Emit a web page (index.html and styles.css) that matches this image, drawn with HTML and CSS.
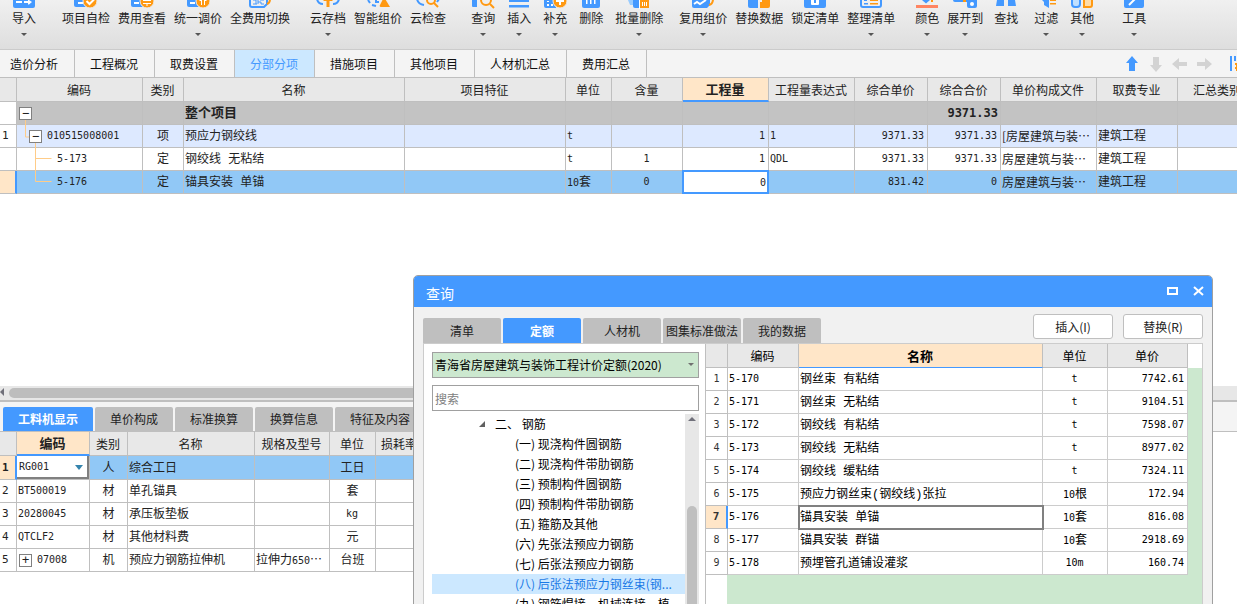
FILE: index.html
```html
<!DOCTYPE html>
<html lang="zh-CN">
<head>
<meta charset="utf-8">
<title>分部分项</title>
<link rel="stylesheet" href="styles.css">
</head>
<body>
<header class="toolbar">
  <div class="group g-first">
    <button class="tool"><svg class="ico" viewBox="0 0 24 9"><path class="b" d="M1 0h22v6q0 2-2 2H3q-2 0-2-2z"/><path class="w" d="M4 1h6v2H4zM12 1h4v-1h1l3 2-3 2.500h-1V3h-4z"/></svg><span>导入</span><i class="caret"></i></button>
  </div>
  <div class="group g-xl">
    <button class="tool"><svg class="ico" viewBox="0 0 24 9"><path class="b" d="M0 0h12v7H2q-2 0-2-2z"/><path class="w" d="M4 2h5v2H4z"/><circle class="o ring" cx="16" cy="1" r="7"/><path class="ws" d="M12.500 1l3 3 5-5"/></svg><span>项目自检</span></button>
    <button class="tool"><svg class="ico" viewBox="0 0 24 9"><path class="b" d="M1 0h12v7H3q-2 0-2-2z"/><path class="w" d="M4 2h5v2H4z"/><circle class="o ring" cx="17" cy="1" r="7"/><path class="w" d="M13 0h8v1h-8zM13 3h8v1h-8zM16.500 3h1v3h-1z"/></svg><span>费用查看</span></button>
    <button class="tool"><svg class="ico" viewBox="0 0 24 9"><path class="b" d="M1 0h12v7H3q-2 0-2-2z"/><path class="w" d="M4 2h5v2H4z"/><circle class="o ring" cx="17" cy="1" r="7"/><path class="w" d="M13 1l2-2h4l2 2h-2v4h-1V0h-2v5h-1V1z"/></svg><span>统一调价</span><i class="caret"></i></button>
    <button class="tool"><svg class="ico" viewBox="0 0 24 9"><path class="bs" d="M2-1v6q0 2 2 2h12l3-3v-5"/><path class="bs thin" d="M5 0h3v4M10 0v4M10 2h3v2h3M5 4h4M12 0h4"/><path class="os" d="M22-1q0 4-3 5"/></svg><span>全费用切换</span></button>
  </div>
  <div class="group g-l">
    <button class="tool"><svg class="ico" viewBox="0 0 24 9"><path class="bs" d="M1-1q1 5 6 5M23-1q-1 5-6 5"/><path class="o" d="M10.500 0h3v7h-3zM7 1l5-5 5 5z"/></svg><span>云存档</span><i class="caret"></i></button>
    <button class="tool"><svg class="ico" viewBox="0 0 24 9"><path class="bs" d="M2 0l2 3M6 5l4 1M10-1v3h3"/><path class="o" d="M18-3l6 10h-9q-2 0-1-2z"/></svg><span>智能组价</span></button>
    <button class="tool"><svg class="ico" viewBox="0 0 24 9"><path class="bs" d="M1-1q1 5 7 6M23-1l-2 3"/><circle class="os" cx="15" cy="0" r="4"/><path class="os" d="M18 3l4 4"/></svg><span>云检查</span></button>
  </div>
  <div class="group g-xl">
    <button class="tool"><svg class="ico" viewBox="0 0 24 9"><path class="b" d="M1 0h5v7H2q-1 0-1-1z"/><circle class="os" cx="15" cy="0" r="5"/><path class="os" d="M19 4l4 4"/></svg><span>查询</span><i class="caret"></i></button>
    <button class="tool"><svg class="ico" viewBox="0 0 24 9"><path class="b" d="M2 0h20v2H2zM2 5h20v2.500H2z"/></svg><span>插入</span><i class="caret"></i></button>
    <button class="tool"><svg class="ico" viewBox="0 0 24 9"><path class="b" d="M1 0h12v8H3q-2 0-2-2z"/><path class="w" d="M4 1h2v1H4zM4 4h2v2H4zM8 4h2v2H8z"/><circle class="o ring" cx="17" cy="1" r="7"/><path class="w" d="M13 0h3v-2h2v2h3v2h-3v3h-2V2h-3z"/></svg><span>补充</span><i class="caret"></i></button>
    <button class="tool"><svg class="ico" viewBox="0 0 24 9"><path class="b" d="M3 0h18v6q0 2-2 2H5q-2 0-2-2z"/><path class="w" d="M7 0h1.500v4H7zM11 0h1.500v4H11zM15 0h1.500v4H15z"/></svg><span>删除</span></button>
    <button class="tool"><svg class="ico" viewBox="0 0 24 9"><path class="lb" d="M1 0h7v5H3z"/><path class="b" d="M6 0h7v8H8q-2 0-2-2z"/><path class="o" d="M13 0h9v8h-9z"/><path class="w" d="M12 0h1v9h-1zM15 2h1v4h-1zM17 2h1v4h-1zM19 2h1v4h-1z"/></svg><span>批量删除</span><i class="caret"></i></button>
  </div>
  <div class="group g-m">
    <button class="tool"><svg class="ico" viewBox="0 0 24 9"><path class="b" d="M1 0h18v5l-3 3H3q-2 0-2-2z"/><path class="ws" d="M3 4l3-2 3 2 6-4"/><path class="os" d="M22-1q0 5-4 6"/></svg><span>复用组价</span><i class="caret"></i></button>
    <button class="tool"><svg class="ico" viewBox="0 0 24 9"><path class="b" d="M1 0h10v8H3q-2 0-2-2z"/><path class="o" d="M13 2h2V0h8v6q0 2-2 2h-8z"/></svg><span>替换数据</span></button>
    <button class="tool"><svg class="ico" viewBox="0 0 24 9"><path class="b" d="M1 0h22v6q0 2-2 2H3q-2 0-2-2z"/><path class="w" d="M8 0h8v4q0 1-1 1H9q-1 0-1-1z"/><path class="b" d="M11 0h2v3h-2z"/></svg><span>锁定清单</span></button>
    <button class="tool"><svg class="ico" viewBox="0 0 24 9"><path class="bs" d="M2-1v6q0 2 2 2h16q2 0 2-2v-6"/><path class="b" d="M5 3h4v1.500H5zM5 0h3v1H5z"/><path class="o" d="M11 3h8v1.500h-8zM11 0h8v1h-8z"/></svg><span>整理清单</span><i class="caret"></i></button>
  </div>
  <div class="group g-l">
    <button class="tool"><svg class="ico" viewBox="0 0 24 9"><path class="r" d="M1 5h22v3H1z"/><path class="b" d="M7 0h8l-4 3.500z"/><path class="o" d="M16 0h2v2h-2z"/></svg><span>颜色</span><i class="caret"></i></button>
    <button class="tool"><svg class="ico" viewBox="0 0 24 9"><path class="b" d="M0 0h10v2H2q-2 0-2-2zM12 0h12v6q0 2-2 2h-6q-2 0-2-2V2h-2z"/><path class="o" d="M10 0h3v2h-3z"/><circle class="w" cx="19" cy="4" r="2"/></svg><span>展开到</span><i class="caret"></i></button>
  </div>
  <div class="group g-s">
    <button class="tool"><svg class="ico" viewBox="0 0 24 9"><path class="b" d="M3 0h7v6H2zM14 0h7l1 6h-8z"/></svg><span>查找</span></button>
  </div>
  <div class="group g-m">
    <button class="tool"><svg class="ico" viewBox="0 0 24 9"><path class="b" d="M8 0h7v8l-5-3V2z"/><path class="o" d="M16 0h6v1h-6zM16 3h6v1.500h-6z"/></svg><span>过滤</span><i class="caret"></i></button>
    <button class="tool"><svg class="ico" viewBox="0 0 24 9"><path class="bs lfill" d="M2-1v5q0 3 3 3h2q3 0 3-3v-5"/><path class="os ofill" d="M14-1v8h6q2 0 2-2v-6"/></svg><span>其他</span><i class="caret"></i></button>
  </div>
  <div class="group g-xxl">
    <button class="tool"><svg class="ico" viewBox="0 0 24 9"><path class="b" d="M2 0h20v6q0 2-2 2H4q-2 0-2-2z"/><path class="ws" d="M7 5l6-6"/></svg><span>工具</span><i class="caret"></i></button>
  </div>
</header>

<nav class="tabs">
  <button class="tab first">造价分析</button>
  <button class="tab">工程概况</button>
  <button class="tab">取费设置</button>
  <button class="tab active">分部分项</button>
  <button class="tab">措施项目</button>
  <button class="tab">其他项目</button>
  <button class="tab">人材机汇总</button>
  <button class="tab">费用汇总</button>
  <div class="moves">
    <button aria-label="上移"><svg width="16" height="16"><path class="b" d="M8 0l6 7h-3v8H5V7H2z"/></svg></button>
    <button aria-label="下移"><svg width="16" height="16"><path class="g" d="M8 16l6-7h-3V1H5v8H2z"/></svg></button>
    <button aria-label="左移"><svg width="16" height="16"><path class="g" d="M0 8l7-6v4h8v4H7v4z"/></svg></button>
    <button aria-label="右移"><svg width="16" height="16"><path class="g" d="M16 8L9 2v4H1v4h8v4z"/></svg></button>
    <button class="cut" aria-label="列设置"><svg width="16" height="16"><path class="b" d="M0 0h2v15H0zM4 0h2v5H4z"/><path class="o" d="M5 7h3V5h3v10H6v-2H5v-2h1V9H5z"/></svg></button>
  </div>
</nav>

<main class="work">
  <table class="grid main-grid">
    <colgroup><col class="w17"><col class="w126"><col class="w41"><col class="w221"><col class="w161"><col class="w46"><col class="w71"><col class="w86"><col class="w86"><col class="w73"><col class="w73"><col class="w96"><col class="w81"><col class="w80"></colgroup>
    <thead><tr><th></th><th>编码</th><th>类别</th><th>名称</th><th>项目特征</th><th>单位</th><th>含量</th><th class="current">工程量</th><th>工程量表达式</th><th>综合单价</th><th>综合合价</th><th>单价构成文件</th><th>取费专业</th><th>汇总类别</th></tr></thead>
    <tbody>
      <tr class="total"><td class="rn"></td><td class="tree"><div class="node lv0"><button class="box" aria-label="折叠">−</button></div></td><td></td><td>整个项目</td><td></td><td></td><td></td><td></td><td></td><td></td><td class="num">9371.33</td><td></td><td></td><td></td></tr>
      <tr class="item"><td class="rn">1</td><td class="tree"><div class="node"><svg class="guide" width="12" height="22"><path d="M8.500-6v18h4"/></svg><button class="box" aria-label="折叠">−</button><span class="code">010515008001</span></div></td><td class="c">项</td><td>预应力钢绞线</td><td></td><td class="code">t</td><td></td><td class="num">1</td><td class="code">1</td><td class="num">9371.33</td><td class="num">9371.33</td><td class="dots">[房屋建筑与装…</td><td>建筑工程</td><td></td></tr>
      <tr><td class="rn"></td><td class="tree"><div class="node"><svg class="guide" width="35" height="22"><path d="M18.500-5v28M18.500 10.500h16"/></svg><span class="code">5-173</span></div></td><td class="c">定</td><td>钢绞线 无粘结</td><td></td><td class="code">t</td><td class="code c">1</td><td class="num">1</td><td class="code">QDL</td><td class="num">9371.33</td><td class="num">9371.33</td><td class="dots">房屋建筑与装…</td><td>建筑工程</td><td></td></tr>
      <tr class="selected"><td class="rn"></td><td class="tree"><div class="node"><svg class="guide" width="35" height="22"><path d="M18.500 0v10.500h16"/></svg><span class="code">5-176</span></div></td><td class="c">定</td><td>锚具安装 单锚</td><td></td><td><span class="code">10</span>套</td><td class="code c">0</td><td class="edit"><input class="qty" type="text" value="0" aria-label="工程量"></td><td></td><td class="num">831.42</td><td class="num">0</td><td class="dots">房屋建筑与装…</td><td>建筑工程</td><td></td></tr>
    </tbody>
  </table>
</main>

<section class="detail">
  <div class="hscroll"><svg width="4" height="10"><path d="M4 0v8L0 4z"/></svg><div class="hthumb"></div></div>
  <nav class="subtabs">
    <button class="subtab wide active">工料机显示</button>
    <button class="subtab">单价构成</button>
    <button class="subtab">标准换算</button>
    <button class="subtab">换算信息</button>
    <button class="subtab wide">特征及内容</button>
  </nav>
  <table class="grid detail-grid">
    <colgroup><col class="w17"><col class="w73"><col class="w38"><col class="w127"><col class="w75"><col class="w46"><col class="w48"></colgroup>
    <thead><tr><th></th><th class="current">编码</th><th>类别</th><th>名称</th><th>规格及型号</th><th>单位</th><th>损耗率</th></tr></thead>
    <tbody>
      <tr class="selected"><td class="rn">1</td><td class="edit"><div class="combo"><select aria-label="编码"><option>RG001</option></select><svg width="10" height="6"><path d="M1 0h8L5 5z"/></svg></div></td><td class="c">人</td><td>综合工日</td><td></td><td class="c">工日</td><td></td></tr>
      <tr><td class="rn">2</td><td class="code">BT500019</td><td class="c">材</td><td>单孔锚具</td><td></td><td class="c">套</td><td></td></tr>
      <tr><td class="rn">3</td><td class="code">20280045</td><td class="c">材</td><td>承压板垫板</td><td></td><td class="code c">kg</td><td></td></tr>
      <tr><td class="rn">4</td><td class="code">QTCLF2</td><td class="c">材</td><td>其他材料费</td><td></td><td class="c">元</td><td></td></tr>
      <tr><td class="rn">5</td><td class="tree"><div class="node lv0"><button class="box" aria-label="展开">+</button><span class="code">07008</span></div></td><td class="c">机</td><td>预应力钢筋拉伸机</td><td class="dots">拉伸力<span class="code">650</span>…</td><td class="c">台班</td><td></td></tr>
    </tbody>
  </table>
</section>

<div class="dialog" role="dialog" aria-label="查询">
  <div class="titlebar">
    <h1>查询</h1>
    <button aria-label="最大化"><svg width="11" height="11"><path class="line" d="M1 2h9v6H1z"/></svg></button>
    <button aria-label="关闭"><svg width="11" height="11"><path class="line" d="M1 1l9 8M10 1l-9 8"/></svg></button>
  </div>
  <div class="dialog-top">
    <button class="subtab">清单</button>
    <button class="subtab active">定额</button>
    <button class="subtab">人材机</button>
    <button class="subtab">图集标准做法</button>
    <button class="subtab">我的数据</button>
    <div class="actions"><button class="action">插入(I)</button><button class="action">替换(R)</button></div>
  </div>
  <div class="dialog-body">
    <div class="side">
      <div class="combo lib"><select aria-label="定额库"><option>青海省房屋建筑与装饰工程计价定额(2020)</option></select><svg width="6" height="4"><path d="M0 0h6L3 3z"/></svg></div>
      <input class="search" type="text" placeholder="搜索" aria-label="搜索">
      <div class="tree-pane">
        <ul class="list">
          <li class="parent"><svg width="8" height="8"><path d="M7 1v6H1z"/></svg>二、 钢筋</li>
          <li>(一) 现浇构件圆钢筋</li>
          <li>(二) 现浇构件带肋钢筋</li>
          <li>(三) 预制构件圆钢筋</li>
          <li>(四) 预制构件带肋钢筋</li>
          <li>(五) 箍筋及其他</li>
          <li>(六) 先张法预应力钢筋</li>
          <li>(七) 后张法预应力钢筋</li>
          <li class="on">(八) 后张法预应力钢丝束(钢...</li>
          <li>(九) 钢筋焊接、机械连接、植</li>
        </ul>
        <div class="vscroll"><svg width="8" height="5"><path d="M0 4h8L4 0z"/></svg><div class="vthumb"></div></div>
      </div>
    </div>
    <div class="quota">
      <table class="grid quota-grid">
        <colgroup><col class="w22"><col class="w71"><col class="w244"><col class="w65"><col class="w80"></colgroup>
        <thead><tr><th></th><th>编码</th><th class="current">名称</th><th>单位</th><th>单价</th></tr></thead>
        <tbody>
          <tr><td class="rn">1</td><td class="code">5-170</td><td>钢丝束 有粘结</td><td class="code c">t</td><td class="num">7742.61</td></tr>
          <tr><td class="rn">2</td><td class="code">5-171</td><td>钢丝束 无粘结</td><td class="code c">t</td><td class="num">9104.51</td></tr>
          <tr><td class="rn">3</td><td class="code">5-172</td><td>钢绞线 有粘结</td><td class="code c">t</td><td class="num">7598.07</td></tr>
          <tr><td class="rn">4</td><td class="code">5-173</td><td>钢绞线 无粘结</td><td class="code c">t</td><td class="num">8977.02</td></tr>
          <tr><td class="rn">5</td><td class="code">5-174</td><td>钢绞线 缓粘结</td><td class="code c">t</td><td class="num">7324.11</td></tr>
          <tr><td class="rn">6</td><td class="code">5-175</td><td>预应力钢丝束(钢绞线)张拉</td><td class="c"><span class="code">10</span>根</td><td class="num">172.94</td></tr>
          <tr class="picked"><td class="rn">7</td><td class="code">5-176</td><td class="focus">锚具安装 单锚</td><td class="c"><span class="code">10</span>套</td><td class="num">816.08</td></tr>
          <tr><td class="rn">8</td><td class="code">5-177</td><td>锚具安装 群锚</td><td class="c"><span class="code">10</span>套</td><td class="num">2918.69</td></tr>
          <tr><td class="rn">9</td><td class="code">5-178</td><td>预埋管孔道铺设灌浆</td><td class="code c">10m</td><td class="num">160.74</td></tr>
        </tbody>
      </table>
    </div>
  </div>
</div>
</body>
</html>
```

FILE: styles.css
```css
* { box-sizing: border-box; }

:root {
  --ui: "Noto Sans CJK SC", "Noto Sans", sans-serif;
  --cell: "Liberation Mono", "Noto Sans CJK SC", monospace;
  --digits: "DejaVu Sans Mono", "Noto Sans CJK SC", monospace;
  --blue: #4499ff;
  --orange: #ff9912;
  --line: #bfbfbf;
  --cream: #ffe6c8;
  --green: #cce8cf;
}

body {
  margin: 0;
  height: 100vh;
  display: flex;
  flex-direction: column;
  position: relative;
  overflow: hidden;
  background: #fff;
  color: #222;
  font: 12px/16px var(--ui);
}

button, input, select { font: inherit; color: inherit; margin: 0; }
button { border: 0; padding: 0; background: none; white-space: nowrap; }
svg { display: block; }

/* icon paints */
.b { fill: var(--blue); }
.lb { fill: #99ccff; }
.o { fill: var(--orange); }
.r { fill: #ff8562; }
.w { fill: #fff; }
.g { fill: #d3d3d3; }
.ring { stroke: #ececec; stroke-width: 1; }
.bs, .os, .ws { fill: none; stroke-width: 2; }
.bs { stroke: var(--blue); }
.os { stroke: var(--orange); }
.ws { stroke: #fff; }
.thin { stroke-width: 1; }
.lfill { fill: #bfdfff; }
.ofill { fill: #ffdca8; }

/* toolbar */
.toolbar {
  flex: none;
  display: flex;
  height: 50px;
  overflow: hidden;
  background: linear-gradient(#f0f0f0, #dedede);
  border-bottom: 1px solid #cbcbcb;
}
.group { display: flex; flex: none; gap: 8px; }
.g-first { margin-left: 12px; }
.g-s { margin-left: 11px; }
.g-m { margin-left: 16px; }
.g-l { margin-left: 20px; }
.g-xl { margin-left: 26px; }
.g-xl:nth-child(4) { margin-left: 25px; }
.g-xxl { margin-left: 28px; }
.g-xl:nth-child(4), .g-m:nth-child(8) { gap: 12px; }
.tool { display: flex; flex-direction: column; align-items: center; }
.ico { width: 24px; height: 9px; overflow: hidden; margin-bottom: 1px; }
.caret {
  margin-top: 7px;
  border: solid transparent;
  border-width: 3px 3px 0;
  border-top-color: #555;
}

/* page tabs */
.tabs {
  flex: none;
  display: flex;
  height: 27px;
  background: #f4f4f4;
}
.tab {
  flex: none;
  padding: 0 16px 0 15px;
  border-right: 1px solid var(--line);
  color: #111;
}
.tab.first { padding-left: 10px; }
.tab.active { background: #cce8ff; color: var(--blue); }
.moves {
  flex: none;
  display: flex;
  align-items: center;
  gap: 8px;
  margin-left: auto;
  margin-right: -9px;
}
.moves .cut { margin-left: 10px; }

/* grids */
.grid {
  table-layout: fixed;
  border-collapse: separate;
  border-spacing: 0;
  width: 0;
  background: #fff;
}
.w17 { width: 17px; } .w22 { width: 22px; } .w38 { width: 38px; }
.w41 { width: 41px; } .w46 { width: 46px; } .w48 { width: 48px; }
.w65 { width: 65px; } .w71 { width: 71px; } .w73 { width: 73px; }
.w75 { width: 75px; } .w80 { width: 80px; } .w81 { width: 81px; }
.w86 { width: 86px; } .w96 { width: 96px; } .w126 { width: 126px; }
.w127 { width: 127px; } .w161 { width: 161px; } .w221 { width: 221px; }
.w244 { width: 244px; }

.grid th, .grid td {
  border: solid var(--line);
  border-width: 0 1px 1px 0;
  line-height: 16px;
  white-space: nowrap;
  overflow: hidden;
}
.grid th {
  height: 24px;
  padding: 0 1px 0 0;
  background: #e8e8e8;
  font: 12px/16px var(--ui);
}
.grid th.current {
  background: var(--cream);
  border-bottom: 2px solid var(--blue);
  font-size: 13px;
  font-weight: 700;
}
.grid td { height: 23px; padding: 2px 1px 0; text-align: left; font-family: var(--cell); }
.grid .code { font-family: var(--digits); font-size: 10px; }
.grid td.code { padding: 0 2px 0 1px; }
.grid .num { padding: 0 3px 0 1px; font-family: var(--digits); font-size: 10px; text-align: right; }
.grid .c { text-align: center; }
.grid .dots { padding: 0 0 1px 1px; font-family: var(--ui); text-overflow: clip; }
.grid td.rn { font: 11px/16px var(--digits); padding: 0 0 0 2px; background: #fff; }
.grid td.tree, .grid td.edit { padding: 0; overflow: visible; }

.total td { background: #c3c3c3; font-weight: 700; font-size: 13px; }
.grid .total .num { font-size: 12px; padding-right: 2px; }
.item td { background: #dde9ff; }
.selected td { background: #91c8f6; }
.grid .selected .rn, .grid .picked .rn {
  background: var(--cream);
  border-right: 2px solid var(--blue);
  font-weight: 700;
}

.node { display: flex; align-items: center; height: 22px; }
.node.lv0 { padding-left: 2px; }
.guide { flex: none; overflow: visible; margin-right: 5px; }
.guide path { fill: none; stroke: #ffcc88; }
.item .guide { margin-right: 0; }
.box {
  flex: none;
  position: relative;
  width: 13px;
  height: 13px;
  margin-right: 5px;
  border: 1px solid #808080;
  background: #fff;
  font: 12px/10px "DejaVu Sans Mono", monospace;
  text-align: center;
}
.qty {
  display: block;
  width: 100%;
  height: 22px;
  padding: 0 2px;
  border: 0;
  outline: 2px solid var(--blue);
  outline-offset: -1px;
  background: #fff;
  font: 10px/16px var(--digits);
  text-align: right;
}

.work { flex: 1; min-height: 0; overflow: hidden; border-top: 1px solid var(--line); }

/* detail pane */
.detail { flex: 0 0 218px; overflow: hidden; }
.hscroll {
  display: flex;
  align-items: center;
  gap: 5px;
  height: 16px;
  padding-bottom: 1px;
  background: #e7e7e7;
  border-bottom: 2px solid var(--line);
}
.hscroll path, .vscroll path { fill: #70707a; }
.hthumb { flex: 1; height: 10px; border-radius: 5px; background: #bdbdbd; margin-right: 60px; }
.subtabs {
  display: flex;
  align-items: flex-end;
  gap: 2px;
  height: 30px;
  padding: 0 3px;
  background: #f4f4f4;
  border-bottom: 1px solid var(--line);
}
.subtab {
  flex: none;
  width: 78px;
  height: 24px;
  border-radius: 2px 2px 0 0;
  background: #bfbfbf;
  color: #222;
}
.subtab.wide { width: 90px; }
.subtab.active { background: var(--blue); color: #fff; font-weight: 700; }

.combo { display: grid; align-items: center; }
.combo select, .combo svg { grid-area: 1 / 1; }
.combo select { appearance: none; width: 100%; border-radius: 0; outline: 0; }
.combo svg { justify-self: end; margin-right: 5px; pointer-events: none; }
.combo path { fill: #707070; }
.detail .combo select {
  height: 23px;
  padding: 0 2px;
  border: solid #808080;
  border-width: 0 2px 2px 0;
  background: #fff;
  font: 10px/16px var(--digits);
}
.detail .combo path { fill: #3584ad; }

/* query dialog */
.dialog {
  position: absolute;
  left: 413px;
  right: 24px;
  top: 275px;
  bottom: -6px;
  display: flex;
  flex-direction: column;
  overflow: hidden;
  border: 1px solid #a0a0a0;
  border-radius: 5px;
  background: #f1f1f1;
}
.titlebar {
  flex: none;
  display: flex;
  align-items: center;
  gap: 15px;
  height: 31px;
  padding: 0 8px 0 12px;
  background: var(--blue);
  color: #fff;
}
.titlebar h1 { flex: 1; margin: 3px 0 0; font: 14px/20px var(--ui); }
.line { fill: none; stroke: #fff; stroke-width: 2; }
.dialog-top {
  flex: none;
  display: flex;
  align-items: flex-end;
  gap: 2px;
  height: 37px;
  margin: 0 9px;
  border-bottom: 1px solid #ccc;
}
.dialog-top .subtab { height: 25px; }
.actions { display: flex; gap: 10px; margin-left: auto; margin-bottom: 4px; }
.action {
  width: 80px;
  height: 25px;
  border: 1px solid var(--line);
  border-radius: 3px;
  background: #fff;
}
.dialog-body {
  flex: 1;
  min-height: 0;
  display: flex;
  margin: 0 9px;
  border: solid #ccc;
  border-width: 0 1px;
  background: #fff;
}
.side {
  flex: none;
  width: 281px;
  display: flex;
  flex-direction: column;
  padding: 8px 6px 0 8px;
  color: #000;
}
.lib select {
  height: 26px;
  padding: 0 2px;
  border: 1px solid #a0a0a0;
  background: var(--green);
}
.search {
  flex: none;
  width: 100%;
  height: 26px;
  margin: 7px 0 3px;
  padding: 0 2px;
  border: 1px solid #a0a0a0;
  background: #fff;
}
.search::placeholder { color: #808080; }
.tree-pane { flex: 1; min-height: 0; display: flex; overflow: hidden; }
.list { flex: 1; margin: 0; padding: 0; list-style: none; }
.list li { height: 20px; padding-left: 83px; line-height: 20px; white-space: nowrap; }
.list .parent { display: flex; align-items: center; gap: 9px; padding-left: 46px; white-space: pre; }
.list path { fill: #606060; }
.list .on { background: #cce8ff; color: #1979e6; }
.vscroll {
  flex: none;
  display: flex;
  flex-direction: column;
  align-items: center;
  width: 14px;
  padding-top: 3px;
  background: #e7e7e7;
}
.vthumb { flex: 1; width: 10px; margin-top: 84px; border-radius: 5px 5px 0 0; background: #bfbfbf; }
.quota { flex: 1; min-width: 0; border-left: 1px solid var(--line); background: linear-gradient(#fff 24px, var(--green) 24px); }
.quota::after { content: ""; display: block; width: 21px; height: 100%; background: #fff; }
.quota-grid { color: #000; }
.grid.quota-grid th.current { border-bottom-width: 1px; }
.quota-grid td { border-color: #ccc; }
.grid.quota-grid td.rn { text-align: center; padding-left: 0; border-color: var(--line); color: #333; font-size: 10px; }
.grid.quota-grid .picked .rn { border-right-color: var(--blue); font-size: 11px; }
.focus { outline: 2px solid #808080; outline-offset: -1px; }
```
